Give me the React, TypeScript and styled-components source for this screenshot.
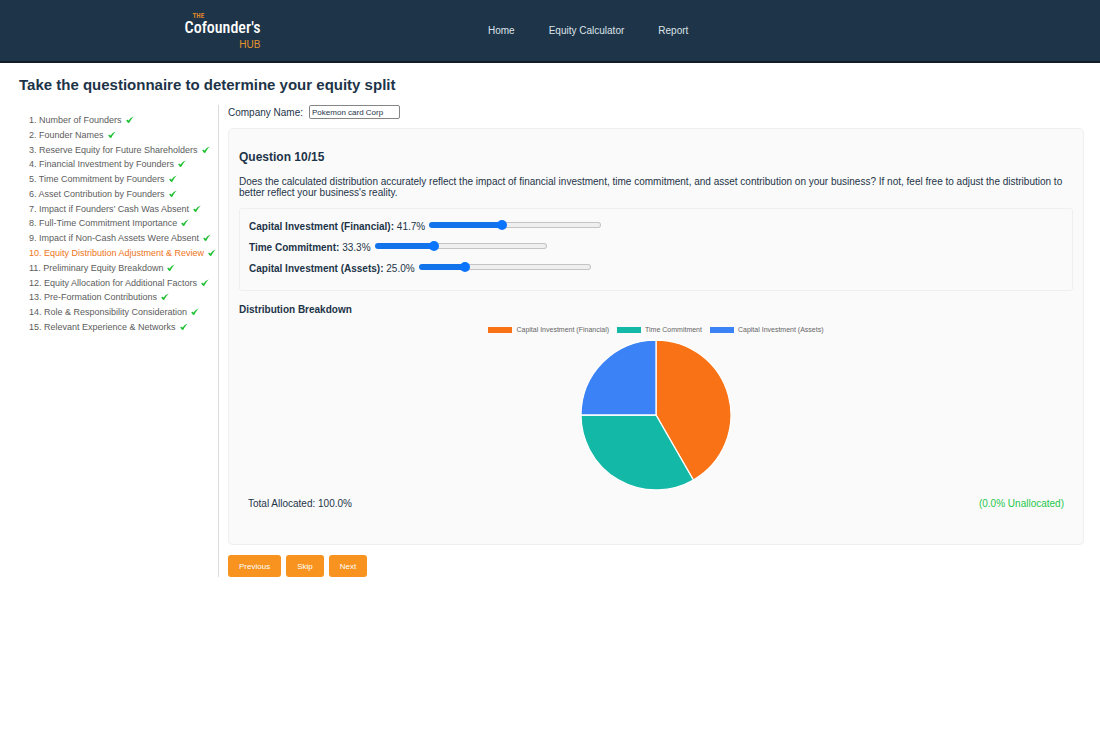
import React, { useState } from "react";
import styled, { createGlobalStyle } from "styled-components";

const GlobalStyle = createGlobalStyle`
  * { box-sizing: border-box; }
  body {
    margin: 0;
    background: #fff;
    color: #1d3448;
    font-family: "Liberation Sans", Arial, sans-serif;
    font-size: 10px;
    line-height: 11px;
  }
  h1, h2, h3, p, ol, fieldset { margin: 0; padding: 0; }
`;

const Header = styled.header`
  display: flex;
  height: 63px;
  background: #1e3549;
  border-bottom: 2px solid #101d29;
`;

const LogoCell = styled.div`
  width: 40%;
  padding: 12px 0 0 5px;
  display: flex;
  justify-content: center;
`;

const Logo = styled.a`
  position: relative;
  display: flex;
  flex-direction: column;
  color: #fff;
  text-decoration: none;
  white-space: nowrap;
`;

const LogoThe = styled.span`
  position: absolute;
  left: 8px;
  top: 0;
  font-size: 7px;
  line-height: 8px;
  font-weight: 700;
  color: #d9822b;
  font-family: "Roboto Condensed", Roboto, sans-serif;
`;

const LogoName = styled.span`
  padding-top: 4px;
  font-family: "Roboto Condensed", Roboto, sans-serif;
  font-size: 16px;
  line-height: 24px;
  font-weight: 500;
`;

const LogoHub = styled.span`
  align-self: flex-end;
  font-size: 10px;
  line-height: 10px;
  color: #e9932c;
`;

const Nav = styled.nav`
  display: flex;
  align-items: center;
  gap: 34px;
  margin-left: 48px;
`;

const NavLink = styled.a`
  color: #dde3e8;
  text-decoration: none;
`;

const Page = styled.main`
  padding: 13px 16px 16px 19px;
`;

const Title = styled.h1`
  font-size: 15px;
  line-height: 18px;
  margin-bottom: 11px;
`;

const Columns = styled.div`
  display: flex;
`;

const Sidebar = styled.aside`
  flex: 0 0 200px;
  padding: 9px 0 0 10px;
  border-right: 1px solid #dcdcdc;
`;

const StepList = styled.ol`
  height: 219px;
  list-style: none;
  display: flex;
  flex-direction: column;
  justify-content: space-between;
`;

const Step = styled.li<{ $active?: boolean }>`
  display: flex;
  align-items: center;
  gap: 4px;
  font-size: 9px;
  line-height: 12px;
  white-space: nowrap;
  color: ${(p) => (p.$active ? "#ee7420" : "#5c5c5c")};
`;

const Content = styled.section`
  flex: 1;
  min-width: 0;
  padding-left: 9px;
`;

const CompanyRow = styled.div`
  display: flex;
  align-items: center;
  gap: 6px;
  height: 14px;
  margin-bottom: 9px;
`;

const CompanyInput = styled.input`
  width: 91px;
  height: 14px;
  padding: 0 2px;
  border: 1px solid #858585;
  border-radius: 2px;
  background: #fff;
  color: #1d3448;
  font: 8px "Liberation Sans", Arial, sans-serif;
`;

const Card = styled.article`
  padding: 21px 10px 35px;
  background: #fafafa;
  border: 1px solid #efefef;
  border-radius: 5px;
`;

const Question = styled.h2`
  font-size: 12px;
  line-height: 14px;
  margin-bottom: 12px;
`;

const Sliders = styled.fieldset`
  display: flex;
  flex-direction: column;
  gap: 9px;
  margin: 10px 0 13px;
  padding: 11px 9px 16px;
  border: 1px solid #efefef;
  border-radius: 3px;
`;

const SliderRow = styled.label`
  display: flex;
  align-items: center;
  gap: 4px;
  height: 12px;
`;

const Slider = styled.input`
  appearance: none;
  width: 172px;
  height: 10px;
  margin: 0 0 3px;
  background: transparent;

  &::-webkit-slider-runnable-track {
    height: 6px;
    border: 1px solid transparent;
    border-radius: 3px;
    background:
      linear-gradient(to right, #1273ea var(--fill), #efefef var(--fill)) padding-box,
      linear-gradient(to right, #1273ea var(--fill), #c4c4c4 var(--fill)) border-box;
  }
  &::-webkit-slider-thumb {
    appearance: none;
    width: 10px;
    height: 10px;
    margin-top: -3px;
    border-radius: 50%;
    background: #0b75ff;
  }
`;

const SubHeading = styled.h3`
  font-size: 10px;
  line-height: 12px;
  margin-bottom: 9px;
`;

const Legend = styled.div`
  display: flex;
  justify-content: center;
  gap: 8px;
  margin-bottom: 4px;
`;

const LegendItem = styled.span`
  display: flex;
  align-items: center;
  gap: 4px;
  font-size: 7px;
  line-height: 10px;
  color: #666;
`;

const Swatch = styled.i<{ $color: string }>`
  width: 24px;
  height: 6px;
  background: ${(p) => p.$color};
`;

const Pie = styled.svg`
  display: block;
  width: 152px;
  height: 152px;
  margin: 0 auto 7px;
`;

const Totals = styled.div`
  display: flex;
  justify-content: space-between;
  padding: 0 9px;
`;

const Unallocated = styled.span`
  color: #1fc84b;
`;

const Actions = styled.div`
  display: flex;
  gap: 5px;
  margin-top: 10px;
`;

const ActionButton = styled.button`
  height: 22px;
  padding: 0 11px;
  border: 0;
  border-radius: 3px;
  background: #f7931e;
  color: #fff;
  font: 8px "Liberation Sans", Arial, sans-serif;
`;

const steps = [
  "Number of Founders",
  "Founder Names",
  "Reserve Equity for Future Shareholders",
  "Financial Investment by Founders",
  "Time Commitment by Founders",
  "Asset Contribution by Founders",
  "Impact if Founders’ Cash Was Absent",
  "Full-Time Commitment Importance",
  "Impact if Non-Cash Assets Were Absent",
  "Equity Distribution Adjustment & Review",
  "Preliminary Equity Breakdown",
  "Equity Allocation for Additional Factors",
  "Pre-Formation Contributions",
  "Role & Responsibility Consideration",
  "Relevant Experience & Networks",
];

const factors = [
  { name: "Capital Investment (Financial)", color: "#f97316", value: 41.7 },
  { name: "Time Commitment", color: "#14b8a6", value: 33.3 },
  { name: "Capital Investment (Assets)", color: "#3b82f6", value: 25 },
];

const Check = () => (
  <svg width="8" height="8" viewBox="0 0 8 8" aria-hidden="true">
    <path d="M0.2 4.4 C0.8 3.6 1.7 3.5 2.1 4.1 L2.6 4.7 C3.9 2.7 5.4 1.2 7.8 0.5 C6 2.3 4.7 4.2 3.5 6.4 C3.1 7 2.1 7.1 1.7 6.4 Z" fill="#1fc032" />
  </svg>
);

const slicePath = (from: number, to: number) => {
  const point = (share: number) => {
    const angle = (share / 100) * 2 * Math.PI;
    return `${76 + 75 * Math.sin(angle)} ${76 - 75 * Math.cos(angle)}`;
  };
  return `M76 76 L${point(from)} A75 75 0 ${to - from > 50 ? 1 : 0} 1 ${point(to)} Z`;
};

export default function App() {
  const [company, setCompany] = useState("Pokemon card Corp");
  const [values, setValues] = useState(factors.map((f) => f.value));
  const total = values.reduce((sum, v) => sum + v, 0);
  let start = 0;
  const slices = values.map((v) => {
    const from = start;
    start += total > 0 ? (v / total) * 100 : 0;
    return slicePath(from, start);
  });

  return (
    <>
      <GlobalStyle />
      <Header>
        <LogoCell>
          <Logo href="#">
            <LogoThe>THE</LogoThe>
            <LogoName>Cofounder's</LogoName>
            <LogoHub>HUB</LogoHub>
          </Logo>
        </LogoCell>
        <Nav>
          <NavLink href="#">Home</NavLink>
          <NavLink href="#">Equity Calculator</NavLink>
          <NavLink href="#">Report</NavLink>
        </Nav>
      </Header>
      <Page>
        <Title>Take the questionnaire to determine your equity split</Title>
        <Columns>
          <Sidebar>
            <StepList>
              {steps.map((step, i) => (
                <Step key={step} $active={i === 9}>
                  <span>{`${i + 1}. ${step}`}</span>
                  <Check />
                </Step>
              ))}
            </StepList>
          </Sidebar>
          <Content>
            <CompanyRow>
              <label htmlFor="company">Company Name:</label>
              <CompanyInput id="company" value={company} onChange={(e) => setCompany(e.target.value)} />
            </CompanyRow>
            <Card>
              <Question>Question 10/15</Question>
              <p>
                Does the calculated distribution accurately reflect the impact of financial investment, time
                commitment, and asset contribution on your business? If not, feel free to adjust the distribution to
                better reflect your business's reality.
              </p>
              <Sliders>
                {factors.map((f, i) => (
                  <SliderRow key={f.name}>
                    <span>
                      <b>{f.name}:</b> {values[i].toFixed(1)}%
                    </span>
                    <Slider
                      type="range"
                      min={0}
                      max={100}
                      step={0.1}
                      value={values[i]}
                      style={{ "--fill": `${values[i]}%` } as React.CSSProperties}
                      onChange={(e) => setValues(values.map((v, j) => (j === i ? Number(e.target.value) : v)))}
                    />
                  </SliderRow>
                ))}
              </Sliders>
              <SubHeading>Distribution Breakdown</SubHeading>
              <Legend>
                {factors.map((f) => (
                  <LegendItem key={f.name}>
                    <Swatch $color={f.color} />
                    {f.name}
                  </LegendItem>
                ))}
              </Legend>
              <Pie viewBox="0 0 152 152" role="img" aria-label="Distribution Breakdown">
                {slices.map((d, i) => (
                  <path key={factors[i].name} d={d} fill={factors[i].color} stroke="#fff" strokeWidth="1.3" strokeLinejoin="round" />
                ))}
              </Pie>
              <Totals>
                <span>Total Allocated: {total.toFixed(1)}%</span>
                <Unallocated>({(100 - total).toFixed(1)}% Unallocated)</Unallocated>
              </Totals>
            </Card>
            <Actions>
              <ActionButton type="button">Previous</ActionButton>
              <ActionButton type="button">Skip</ActionButton>
              <ActionButton type="button">Next</ActionButton>
            </Actions>
          </Content>
        </Columns>
      </Page>
    </>
  );
}
